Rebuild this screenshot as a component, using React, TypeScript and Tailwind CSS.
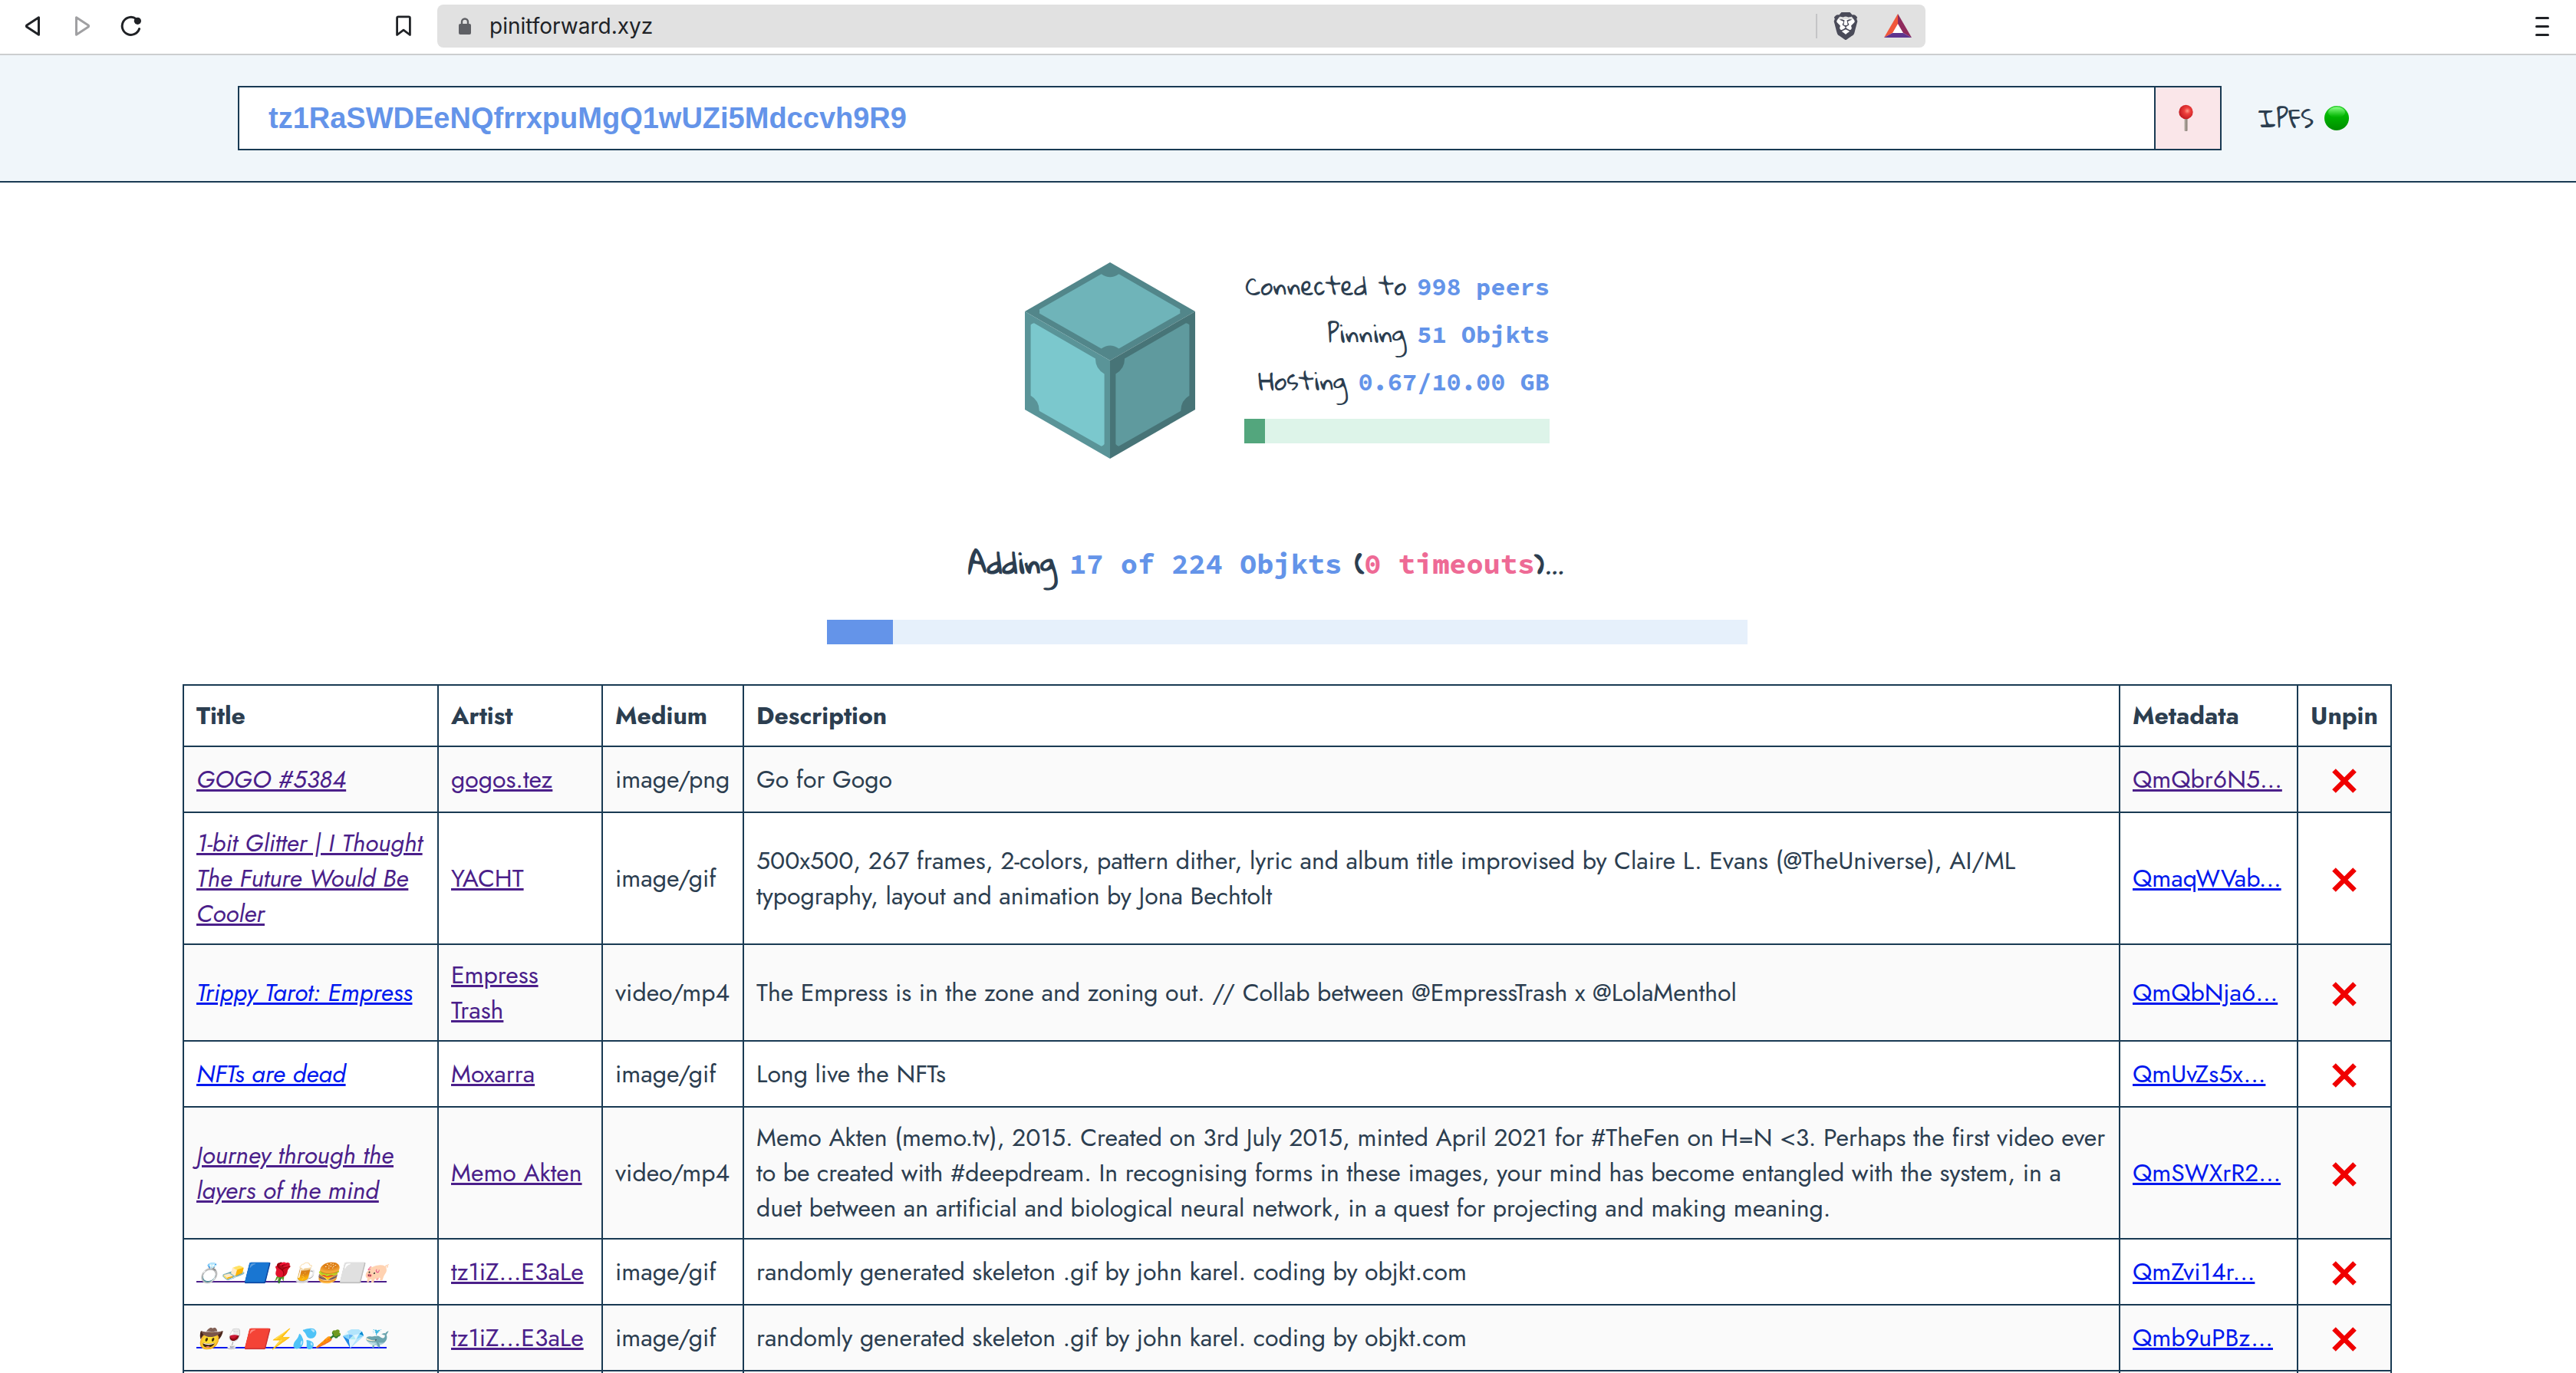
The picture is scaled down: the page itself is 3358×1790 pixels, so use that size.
import { SiBrave } from 'react-icons/si';

type Row = {
  title: string;
  titleVisited?: boolean;
  emojiTitle?: boolean;
  artist: string;
  medium: string;
  description: string;
  cid: string;
  cidVisited?: boolean;
};

const rows: Row[] = [
  {
    title: 'GOGO #5384',
    titleVisited: true,
    artist: 'gogos.tez',
    medium: 'image/png',
    description: 'Go for Gogo',
    cid: 'QmQbr6N5...',
    cidVisited: true,
  },
  {
    title: '1-bit Glitter | I Thought The Future Would Be Cooler',
    titleVisited: true,
    artist: 'YACHT',
    medium: 'image/gif',
    description:
      '500x500, 267 frames, 2-colors, pattern dither, lyric and album title improvised by Claire L. Evans (@TheUniverse), AI/ML typography, layout and animation by Jona Bechtolt',
    cid: 'QmaqWVab...',
  },
  {
    title: 'Trippy Tarot: Empress',
    artist: 'Empress Trash',
    medium: 'video/mp4',
    description:
      'The Empress is in the zone and zoning out. // Collab between @EmpressTrash x @LolaMenthol',
    cid: 'QmQbNja6...',
  },
  {
    title: 'NFTs are dead',
    artist: 'Moxarra',
    medium: 'image/gif',
    description: 'Long live the NFTs',
    cid: 'QmUvZs5x...',
  },
  {
    title: 'Journey through the layers of the mind',
    titleVisited: true,
    artist: 'Memo Akten',
    medium: 'video/mp4',
    description:
      'Memo Akten (memo.tv), 2015. Created on 3rd July 2015, minted April 2021 for #TheFen on H=N <3. Perhaps the first video ever to be created with #deepdream. In recognising forms in these images, your mind has become entangled with the system, in a duet between an artificial and biological neural network, in a quest for projecting and making meaning.',
    cid: 'QmSWXrR2...',
  },
  {
    title: '💍🧈🟦🌹🍺🍔⬜🐖',
    titleVisited: true,
    emojiTitle: true,
    artist: 'tz1iZ...E3aLe',
    medium: 'image/gif',
    description: 'randomly generated skeleton .gif by john karel. coding by objkt.com',
    cid: 'QmZvi14r...',
  },
  {
    title: '🤠🍷🟥⚡💦🥕💎🐳',
    emojiTitle: true,
    artist: 'tz1iZ...E3aLe',
    medium: 'image/gif',
    description: 'randomly generated skeleton .gif by john karel. coding by objkt.com',
    cid: 'Qmb9uPBz...',
  },
];

const linkColor = (visited?: boolean) => (visited ? 'text-[#4b1f8a]' : 'text-[#0018ee]');

function Toolbar() {
  return (
    <div className="flex h-[72px] items-center border-b-2 border-[#cccecf] bg-white pb-[2px]">
      <div className="flex w-[570px] shrink-0 items-center pl-[33px] pr-[34px]">
        <button type="button" aria-label="Back">
          <svg width="20" height="28" viewBox="0 0 20 28" fill="none" stroke="#202226" strokeWidth="3" strokeLinejoin="round">
            <path d="M17.5 2.8v22.4L2.2 15.3q-1.6-1.3 0-2.6z" />
          </svg>
        </button>
        <button type="button" aria-label="Forward" className="ml-[44px]">
          <svg width="20" height="28" viewBox="0 0 20 28" fill="none" stroke="#a0a0a2" strokeWidth="3" strokeLinejoin="round">
            <path d="M2.5 2.8v22.4l15.3-9.9q1.6-1.3 0-2.6z" />
          </svg>
        </button>
        <button type="button" aria-label="Reload" className="ml-[40px]">
          <svg width="28" height="28" viewBox="0 0 28 28">
            <path d="M20.5 4.6A11.5 11.5 0 1 0 24.6 17.6" fill="none" stroke="#202226" strokeWidth="3" strokeLinecap="round" />
            <circle cx="22.4" cy="7.3" r="4.6" fill="#202226" />
          </svg>
        </button>
        <button type="button" aria-label="Bookmark this page" className="ml-auto">
          <svg width="20" height="28" viewBox="0 0 20 28" fill="none" stroke="#202226" strokeWidth="2.8" strokeLinejoin="round">
            <path d="M1.6 3.5q0-1.6 1.6-1.6h13.6q1.6 0 1.6 1.6v22L10 19.2l-8.4 6.3z" />
          </svg>
        </button>
      </div>
      <div className="flex h-[56px] flex-1 items-center rounded-lg bg-[#e1e1e1] pl-[27px] pr-[18px]">
        <svg width="18" height="22" viewBox="0 0 18 22">
          <path d="M5 9V5.5a4 4 0 0 1 8 0V9" fill="none" stroke="#5f6065" strokeWidth="2.4" />
          <rect x="1" y="8" width="16" height="14" rx="2" fill="#5f6065" />
        </svg>
        <input
          type="text"
          aria-label="Address"
          defaultValue="pinitforward.xyz"
          className="ml-[23px] min-w-0 flex-1 bg-transparent font-[Inter,sans-serif] text-[28px] leading-[36px] text-[#202226] outline-none"
        />
        <span className="h-[32px] w-[2px] bg-[#c4c4c6]" />
        <button type="button" aria-label="Brave Shields" className="ml-[19px]">
          <svg width="36" height="36" viewBox="0 0 36 36">
            <path d="M8 9h20l2 4-4 14-8 6-8-6-4-14z" fill="#fff" />
            <SiBrave size={36} color="#4a4b59" />
          </svg>
        </button>
        <button type="button" aria-label="Brave Rewards" className="ml-[32px]">
          <svg width="36" height="32" viewBox="0 0 36 32">
            <path d="M18 10 28 27H8z" fill="#fff" />
            <path d="M18 0 0 31l11-6 7-12z" fill="#f1573a" />
            <path d="m18 0 18 31-11-6-7-12z" fill="#8f2a5c" />
            <path d="m0 31 11-6h14l11 6z" fill="#5f358f" />
          </svg>
        </button>
      </div>
      <div className="flex w-[848px] shrink-0 justify-end pr-[35px]">
        <button type="button" aria-label="Menu" className="flex w-[18px] flex-col gap-[8px]">
          <span className="h-[3px] w-full rounded-full bg-[#202226]" />
          <span className="h-[3px] w-full rounded-full bg-[#202226]" />
          <span className="h-[3px] w-full rounded-full bg-[#202226]" />
        </button>
      </div>
    </div>
  );
}

function PinBar() {
  return (
    <header className="flex items-center border-b-2 border-[#193a53] bg-[#f0f6fa] pb-[40px] pl-[310px] pr-[296px] pt-[40px]">
      <form className="flex h-[84px] flex-1 border-2 border-[#193a53] bg-white" onSubmit={(e) => e.preventDefault()}>
        <input
          type="text"
          aria-label="Wallet address"
          defaultValue="tz1RaSWDEeNQfrrxpuMgQ1wUZi5Mdccvh9R9"
          className="min-w-0 flex-1 px-[38px] font-['Liberation_Sans',Arial,sans-serif] text-[38px] font-bold text-[#6494e9] outline-none"
        />
        <button
          type="submit"
          aria-label="Pin"
          className="flex w-[86px] items-center justify-center border-l-2 border-[#193a53] bg-[#fae6e9]"
        >
          <svg width="24" height="36" viewBox="0 0 24 36">
            <defs>
              <radialGradient id="pinHead" cx="0.6" cy="0.42" r="0.62">
                <stop offset="0" stopColor="#ff9a88" />
                <stop offset="0.35" stopColor="#ee3f3c" />
                <stop offset="1" stopColor="#c0181f" />
              </radialGradient>
              <linearGradient id="pinStem">
                <stop offset="0" stopColor="#b9b2a9" />
                <stop offset="1" stopColor="#857b72" />
              </linearGradient>
            </defs>
            <rect x="7.500" y="17" width="4" height="18" rx="1" fill="url(#pinStem)" />
            <circle cx="9.500" cy="10" r="9.2" fill="url(#pinHead)" />
          </svg>
        </button>
      </form>
      <div className="flex items-center gap-[14px] pl-[48px] font-['Gloria_Hallelujah',cursive] text-[32px] leading-[62px]">
        IPFS
        <svg width="32" height="32" viewBox="0 0 32 32" role="img" aria-label="online">
          <defs>
            <linearGradient id="orb" x2="0" y2="1">
              <stop offset="0" stopColor="#2fd22f" />
              <stop offset="0.4" stopColor="#00b500" />
              <stop offset="1" stopColor="#008c00" />
            </linearGradient>
            <linearGradient id="shine" x2="0" y2="1">
              <stop offset="0" stopColor="#8dff8a" />
              <stop offset="1" stopColor="#3cd83a" stopOpacity="0" />
            </linearGradient>
          </defs>
          <circle cx="16" cy="16" r="16" fill="url(#orb)" />
          <ellipse cx="16" cy="8.5" rx="11" ry="7" fill="url(#shine)" />
        </svg>
      </div>
    </header>
  );
}

function Cube() {
  return (
    <svg width="222" height="256" viewBox="0 0 222 256" role="img" aria-label="IPFS cube">
      <path d="M111 0 222 64 111 128 0 64z" fill="#52868a" />
      <path d="M0 64l111 64v128L0 192z" fill="#5a9498" />
      <path d="M222 64l-111 64v128l111-64z" fill="#477477" />
      <path
        d="M99.7 15.2q11.3 8 22.8 0l80 46.2q-.6 2.5 0 5l-80 46q-11.4-7.600-22.800 0l-80.900-46q.6-2.500 0-5z"
        fill="#6fb4b9"
      />
      <path
        d="M7.600 81.500q1.600-2 4.400-2.200l80 46.200q-.400 13 11.600 20V237q-1.400 2-3.900 2.800l-80.900-46q0-13.500-11.200-20z"
        fill="#7bc8cd"
      />
      <path
        d="M214.400 81.500q-1.600-2-4.400-2.200l-80 46.200q.400 13-11.600 20V237q1.400 2 3.900 2.800l80.900-46q0-13.500 11.200-20z"
        fill="#5f9a9e"
      />
    </svg>
  );
}

function Stat({ label, value }: { label: string; value: string }) {
  return (
    <div className="flex items-baseline justify-end gap-[14px] whitespace-nowrap leading-[60px]">
      <span className="font-['Gloria_Hallelujah',cursive]">{label}</span>
      <span className="font-['Source_Code_Pro','Liberation_Mono',monospace] font-bold text-[#6494e9]">{value}</span>
    </div>
  );
}

export default function App() {
  return (
    <div className="h-screen overflow-hidden bg-white font-[Jost,Lato,sans-serif] text-[32px] leading-[46px] text-[#2c3e50]">
      <Toolbar />
      <PinBar />
      <main className="flex flex-col items-center pr-[2px] pt-[104px]">
        <section className="flex items-start gap-[64px]">
          <Cube />
          <div className="flex w-[398px] flex-col">
            <Stat label="Connected to" value="998 peers" />
            <Stat label="Pinning" value="51 Objkts" />
            <Stat label="Hosting" value="0.67/10.00 GB" />
            <div
              role="progressbar"
              aria-label="Storage used"
              aria-valuenow={0.67}
              aria-valuemax={10}
              className="mt-[18px] h-[32px] bg-[#ddf4e9]"
            >
              <div className="h-full bg-[#53a67d]" style={{ width: `${(0.67 / 10) * 100}%` }} />
            </div>
          </div>
        </section>
        <h3 className="mt-[98px] whitespace-nowrap pr-[56px] font-['Gloria_Hallelujah',cursive] text-[37px] font-bold leading-[74px]">
          Adding{' '}
          <span className="font-['Source_Code_Pro','Liberation_Mono',monospace] text-[#6494e9]">17 of 224 Objkts</span>{' '}
          (<span className="font-['Source_Code_Pro','Liberation_Mono',monospace] text-[#ee6a95]">0 timeouts</span>)...
        </h3>
        <div
          role="progressbar"
          aria-label="Objkts added"
          aria-valuenow={16}
          aria-valuemax={224}
          className="mt-[36px] h-[32px] w-full max-w-[1200px] bg-[#e6f0fb]"
        >
          <div className="h-full bg-[#6494e9]" style={{ width: `${(16 / 224) * 100}%` }} />
        </div>
        <table className="mt-[52px] w-full max-w-[2880px] table-fixed border-collapse">
          <colgroup>
            <col className="w-[332px]" />
            <col className="w-[214px]" />
            <col className="w-[184px]" />
            <col />
            <col className="w-[232px]" />
            <col className="w-[122px]" />
          </colgroup>
          <thead>
            <tr>
              {['Title', 'Artist', 'Medium', 'Description', 'Metadata', 'Unpin'].map((h) => (
                <th key={h} scope="col" className="border-2 border-[#193a53] p-[16px] text-left font-bold">
                  {h}
                </th>
              ))}
            </tr>
          </thead>
          <tbody>
            {rows.map((r) => (
              <tr key={r.cid} className="odd:bg-[#fafafa]">
                <td className="border-2 border-[#193a53] p-[16px] italic">
                  <a
                    href="#"
                    className={`underline ${linkColor(r.titleVisited)} ${r.emojiTitle ? 'whitespace-nowrap text-[25px]' : ''}`}
                  >
                    {r.title}
                  </a>
                </td>
                <td className="border-2 border-[#193a53] p-[16px]">
                  <a href="#" className="text-[#4b1f8a] underline">
                    {r.artist}
                  </a>
                </td>
                <td className="border-2 border-[#193a53] p-[16px]">{r.medium}</td>
                <td className="border-2 border-[#193a53] p-[16px]">{r.description}</td>
                <td className="border-2 border-[#193a53] p-[16px]">
                  <a href="#" className={`underline ${linkColor(r.cidVisited)}`}>
                    {r.cid}
                  </a>
                </td>
                <td className="border-2 border-[#193a53] p-[16px]">
                  <button type="button" aria-label="Unpin" className="mx-auto flex h-[52px] items-center pt-[4px]">
                    <svg width="32" height="32" viewBox="0 0 32 32" fill="none" stroke="#f00000" strokeWidth="6.5">
                      <path d="M2.500 2.500l27 27M29.500 2.500l-27 27" />
                    </svg>
                  </button>
                </td>
              </tr>
            ))}
            <tr>
              {[0, 1, 2, 3, 4, 5].map((c) => (
                <td key={c} className="h-[86px] border-2 border-[#193a53]" />
              ))}
            </tr>
          </tbody>
        </table>
      </main>
    </div>
  );
}
